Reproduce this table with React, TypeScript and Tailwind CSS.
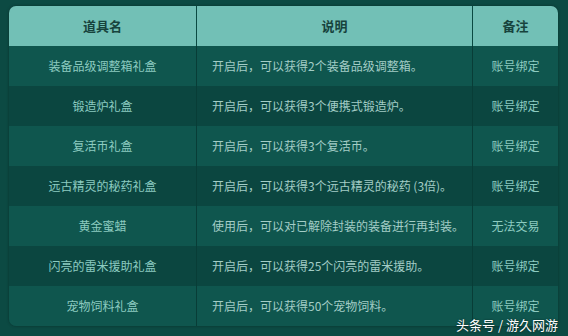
const rows = [
  { name: "装备品级调整箱礼盒", desc: "开启后，可以获得2个装备品级调整箱。", note: "账号绑定" },
  { name: "锻造炉礼盒", desc: "开启后，可以获得3个便携式锻造炉。", note: "账号绑定" },
  { name: "复活币礼盒", desc: "开启后，可以获得3个复活币。", note: "账号绑定" },
  { name: "远古精灵的秘药礼盒", desc: "开启后，可以获得3个远古精灵的秘药 (3倍)。", note: "账号绑定" },
  { name: "黄金蜜蜡", desc: "使用后，可以对已解除封装的装备进行再封装。", note: "无法交易" },
  { name: "闪亮的雷米援助礼盒", desc: "开启后，可以获得25个闪亮的雷米援助。", note: "账号绑定" },
  { name: "宠物饲料礼盒", desc: "开启后，可以获得50个宠物饲料。", note: "账号绑定" },
];

const font = { fontFamily: '"Microsoft YaHei", "Noto Sans CJK SC", sans-serif' };

export default function App() {
  return (
    <div className="relative w-[568px] h-[336px] overflow-hidden bg-[#0c4a43] pt-[6px] pl-[9px]" style={font}>
      <div className="w-[549px] rounded-[7px] overflow-hidden shadow-[0_0_3px_rgba(0,0,0,0.35)]">
        <div className="grid grid-cols-[188px_276px_85px] h-[40px] bg-[#72c0b6] text-[13px] font-bold text-[#17433d]">
          <div className="flex items-center justify-center border-r border-[#0a4a42]">道具名</div>
          <div className="flex items-center justify-center border-r border-[#0a4a42]">说明</div>
          <div className="flex items-center justify-center">备注</div>
        </div>
        {rows.map((r, i) => (
          <div
            key={i}
            className={`grid grid-cols-[188px_276px_85px] h-[40px] text-[12px] ${
              i % 2 === 0 ? "bg-[#0f564e]" : "bg-[#0b4640]"
            }`}
          >
            <div className="flex items-center justify-center border-r border-[#083d37] text-[#8ccbc0]">{r.name}</div>
            <div className="flex items-center pl-[15px] border-r border-[#083d37] text-[#a3cdc6]">{r.desc}</div>
            <div className="flex items-center justify-center text-[#8ccbc0]">{r.note}</div>
          </div>
        ))}
      </div>
      <div className="absolute right-[10px] bottom-[3px] text-[13px] leading-[16px] text-white [text-shadow:0_0_2px_rgba(0,0,0,0.6)]">
        头条号 / 游久网游
      </div>
    </div>
  );
}
